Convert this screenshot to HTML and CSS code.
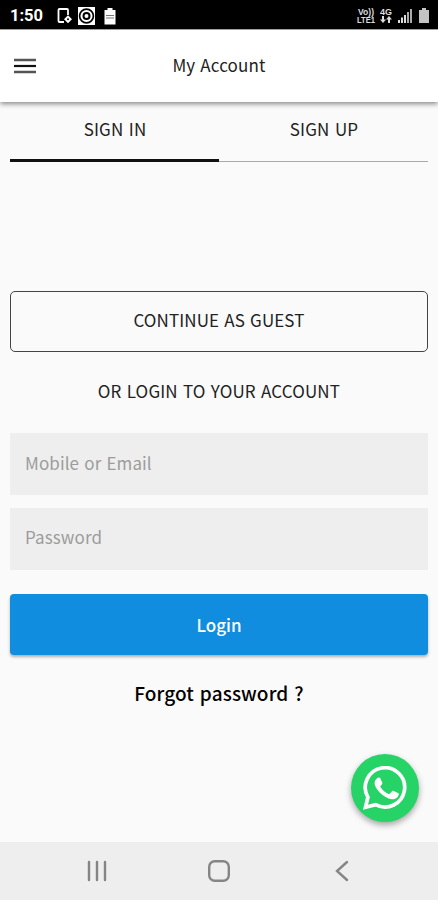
FILE: index.html
```html
<!DOCTYPE html>
<html lang="en">
<head>
<meta charset="utf-8">
<title>My Account</title>
<link rel="stylesheet" href="styles.css">
</head>
<body>
<div class="screen">
  <div class="status">
    <span class="clock">1:50</span>
    <svg class="status-left" width="64" height="20" viewBox="0 0 64 20" fill="none" stroke="#fff">
      <path d="M9 16H4.500q-1 0-1-1V4q0-1 1-1H12q1 0 1 1v5" stroke-width="1.8"/>
      <path d="M13 9.300l4 4-4 4-4-4z" fill="#fff" stroke="none"/><circle cx="13" cy="13.300" r="1" fill="#000" stroke="none"/>
      <rect x="23" y="1" width="17" height="18" fill="#fff" stroke="none"/>
      <circle cx="31.500" cy="10" r="6.900" stroke="#000" stroke-width="1.700"/>
      <circle cx="31.500" cy="10" r="3" stroke="#000" stroke-width="2"/>
      <path d="M52.500 2h5v2h3v14.500h-11V4h3z" fill="#fff" stroke="none"/>
      <path d="M51 9.500h8M51 12h8" stroke="#777"/>
    </svg>
    <svg class="status-right" width="74" height="20" viewBox="0 0 74 20" fill="#ddd">
      <g class="tiny">
        <text x="2" y="8.500" textLength="16" lengthAdjust="spacingAndGlyphs">Vo))</text>
        <text x="1" y="17" textLength="18" lengthAdjust="spacingAndGlyphs">LTE1</text>
        <text x="24" y="8.500" textLength="12" lengthAdjust="spacingAndGlyphs">4G</text>
      </g>
      <path d="M27 17l-3-3.500h2V10h2v3.500h2zM33 10l3 3.500h-2V17h-2v-3.500h-2z"/>
      <path d="M42 14h2v3h-2zM45 11.500h2V17h-2zM48 9h2v8h-2z"/><path d="M51 6h2v11h-2zM54 3h2v14h-2z" fill="#aaa"/>
      <path d="M66 2h4v2h3v13H63V4h3z" fill="#c4c4c4"/>
    </svg>
  </div>
  <header class="bar">
    <svg class="menu" width="22" height="16" viewBox="0 0 22 16"><path d="M0 1.900h22M0 14.100h22" stroke="#555" stroke-width="2.500"/><path d="M0 8h22" stroke="#111" stroke-width="2.200"/></svg>
    <h1 class="title">My Account</h1>
  </header>
  <main class="content">
    <nav class="tabs">
      <div class="tab tab-active">SIGN IN</div>
      <div class="tab">SIGN UP</div>
    </nav>
    <button class="guest">CONTINUE AS GUEST</button>
    <p class="or">OR LOGIN TO YOUR ACCOUNT</p>
    <div class="field field-email">Mobile or Email</div>
    <div class="field field-password">Password</div>
    <button class="login">Login</button>
    <p class="forgot">Forgot password ?</p>
  </main>
  <div class="chat">
    <svg width="44" height="44" viewBox="0 0 44 44">
      <path d="M4.900 31.200A19.700 19.700 0 1 1 12.600 38.700L2.500 41.300z" fill="none" stroke="#fff" stroke-width="3.700" stroke-linejoin="miter"/>
      <path d="M14.300 12.100c.8-.8 2.500-.9 3 .1l2 4.600c.4 1-.8 2.200-1.700 3.200-.5.500-.2 1 .2 1.600 1.900 3 4.400 4.900 7.700 6.300.6.300 1 .2 1.500-.3l2-2.400c.5-.6 1-.6 1.700-.3l4.300 2.100c.7.400.9.600.8 1.300-.3 3-3.300 5-6.300 5-5.700 0-13.400-5.900-16.700-12-2-3.700-1.400-6.800 1.500-9.200z" fill="#fff"/>
    </svg>
  </div>
  <footer class="navbar">
    <svg width="20" height="22" viewBox="0 0 20 22" stroke="#858585" stroke-width="2.400" stroke-linecap="round"><path d="M2 2v18M10 2v18M18 2v18"/></svg>
    <svg width="22" height="22" viewBox="0 0 22 22" fill="none" stroke="#858585" stroke-width="2.400"><rect x="1.200" y="1.200" width="19.600" height="19.600" rx="5.500"/></svg>
    <svg width="20" height="22" viewBox="0 0 20 22" fill="none" stroke="#858585" stroke-width="2.400" stroke-linecap="round"><path d="M16 2L6 11l10 9"/></svg>
  </footer>
</div>
</body>
</html>
```

FILE: styles.css
```css
* { box-sizing: border-box; }
body {
  margin: 0;
  font-family: "Noto Sans CJK JP", "Noto Sans", sans-serif;
  color: #222;
}
.screen {
  position: relative;
  display: flex;
  flex-direction: column;
  width: 438px;
  height: 900px;
  background: #fafafa;
  overflow: hidden;
}
.status {
  display: flex;
  align-items: center;
  height: 30px;
  padding: 0 8px 0 10px;
  background: #000;
  border-bottom: 1px solid #aaa;
}
.clock {
  width: 45px;
  color: #fff;
  font: 700 16.500px/26px Roboto, sans-serif;
  padding-top: 3px;
}
.status-right { margin: 2px 0 0 auto; }
.status-left { margin-top: 2px; }
.tiny { font: 700 8.500px "Liberation Sans", sans-serif; }
.bar {
  display: grid;
  grid-template-columns: 60px 1fr 60px;
  align-items: center;
  height: 72px;
  background: #fff;
  box-shadow: 0 2px 5px rgba(0, 0, 0, .45);
}
.menu { margin-left: 14px; }
.title {
  margin: 0 0 2px;
  text-align: center;
  font-size: 17px;
  line-height: 24px;
  font-weight: 400;
  letter-spacing: .15px;
  word-spacing: 1px;
}
.content {
  flex: 1;
  display: flex;
  flex-direction: column;
  padding: 0 10px;
}
.tabs {
  display: grid;
  grid-template-columns: 1fr 1fr;
  height: 60px;
}
.tab {
  padding: 15px 0 0 1px;
  border-bottom: 1px solid #aaa;
  text-align: center;
  font-size: 17px;
  line-height: 24px;
  letter-spacing: .15px;
  word-spacing: 1.500px;
}
.tab-active { border-bottom: 3px solid #111; }
button { font-family: inherit; padding: 0; }
.guest {
  height: 61px;
  margin-top: 129px;
  border: 1px solid #444;
  border-radius: 5px;
  background: transparent;
  color: #222;
  font-size: 17px;
  padding-bottom: 4px;
  letter-spacing: .1px;
  word-spacing: 1.200px;
}
.or {
  margin: 27px 0 0;
  text-align: center;
  font-size: 17px;
  line-height: 24px;
  letter-spacing: .15px;
  word-spacing: 1.200px;
}
.field {
  height: 62px;
  padding-left: 15px;
  background: #eee;
  color: #9c9c9c;
  font-size: 17px;
  line-height: 59px;
  letter-spacing: .1px;
  word-spacing: 1.200px;
}
.field-email { margin-top: 30px; }
.field-password { margin-top: 13px; line-height: 58px; }
.login {
  height: 61px;
  margin-top: 24px;
  padding-bottom: 0;
  border: 0;
  border-radius: 4px;
  background: #108ddf;
  box-shadow: 0 2px 3px rgba(0, 0, 0, .3);
  color: #fff;
  font-size: 17px;
  font-weight: 500;
}
.forgot {
  margin: 25px 0 0;
  text-align: center;
  color: #000;
  font-size: 19px;
  line-height: 26px;
  font-weight: 500;
  letter-spacing: .1px;
  word-spacing: 1.500px;
}
.chat {
  position: absolute;
  left: 351px;
  top: 754px;
  display: grid;
  place-items: center;
  width: 68px;
  height: 68px;
  border-radius: 50%;
  background: #25d366;
  box-shadow: 0 3px 6px rgba(0, 0, 0, .35);
}
.navbar {
  display: grid;
  grid-template-columns: 122px 122px 122px;
  justify-content: center;
  justify-items: center;
  align-items: center;
  height: 58px;
  background: #eee;
}
```
